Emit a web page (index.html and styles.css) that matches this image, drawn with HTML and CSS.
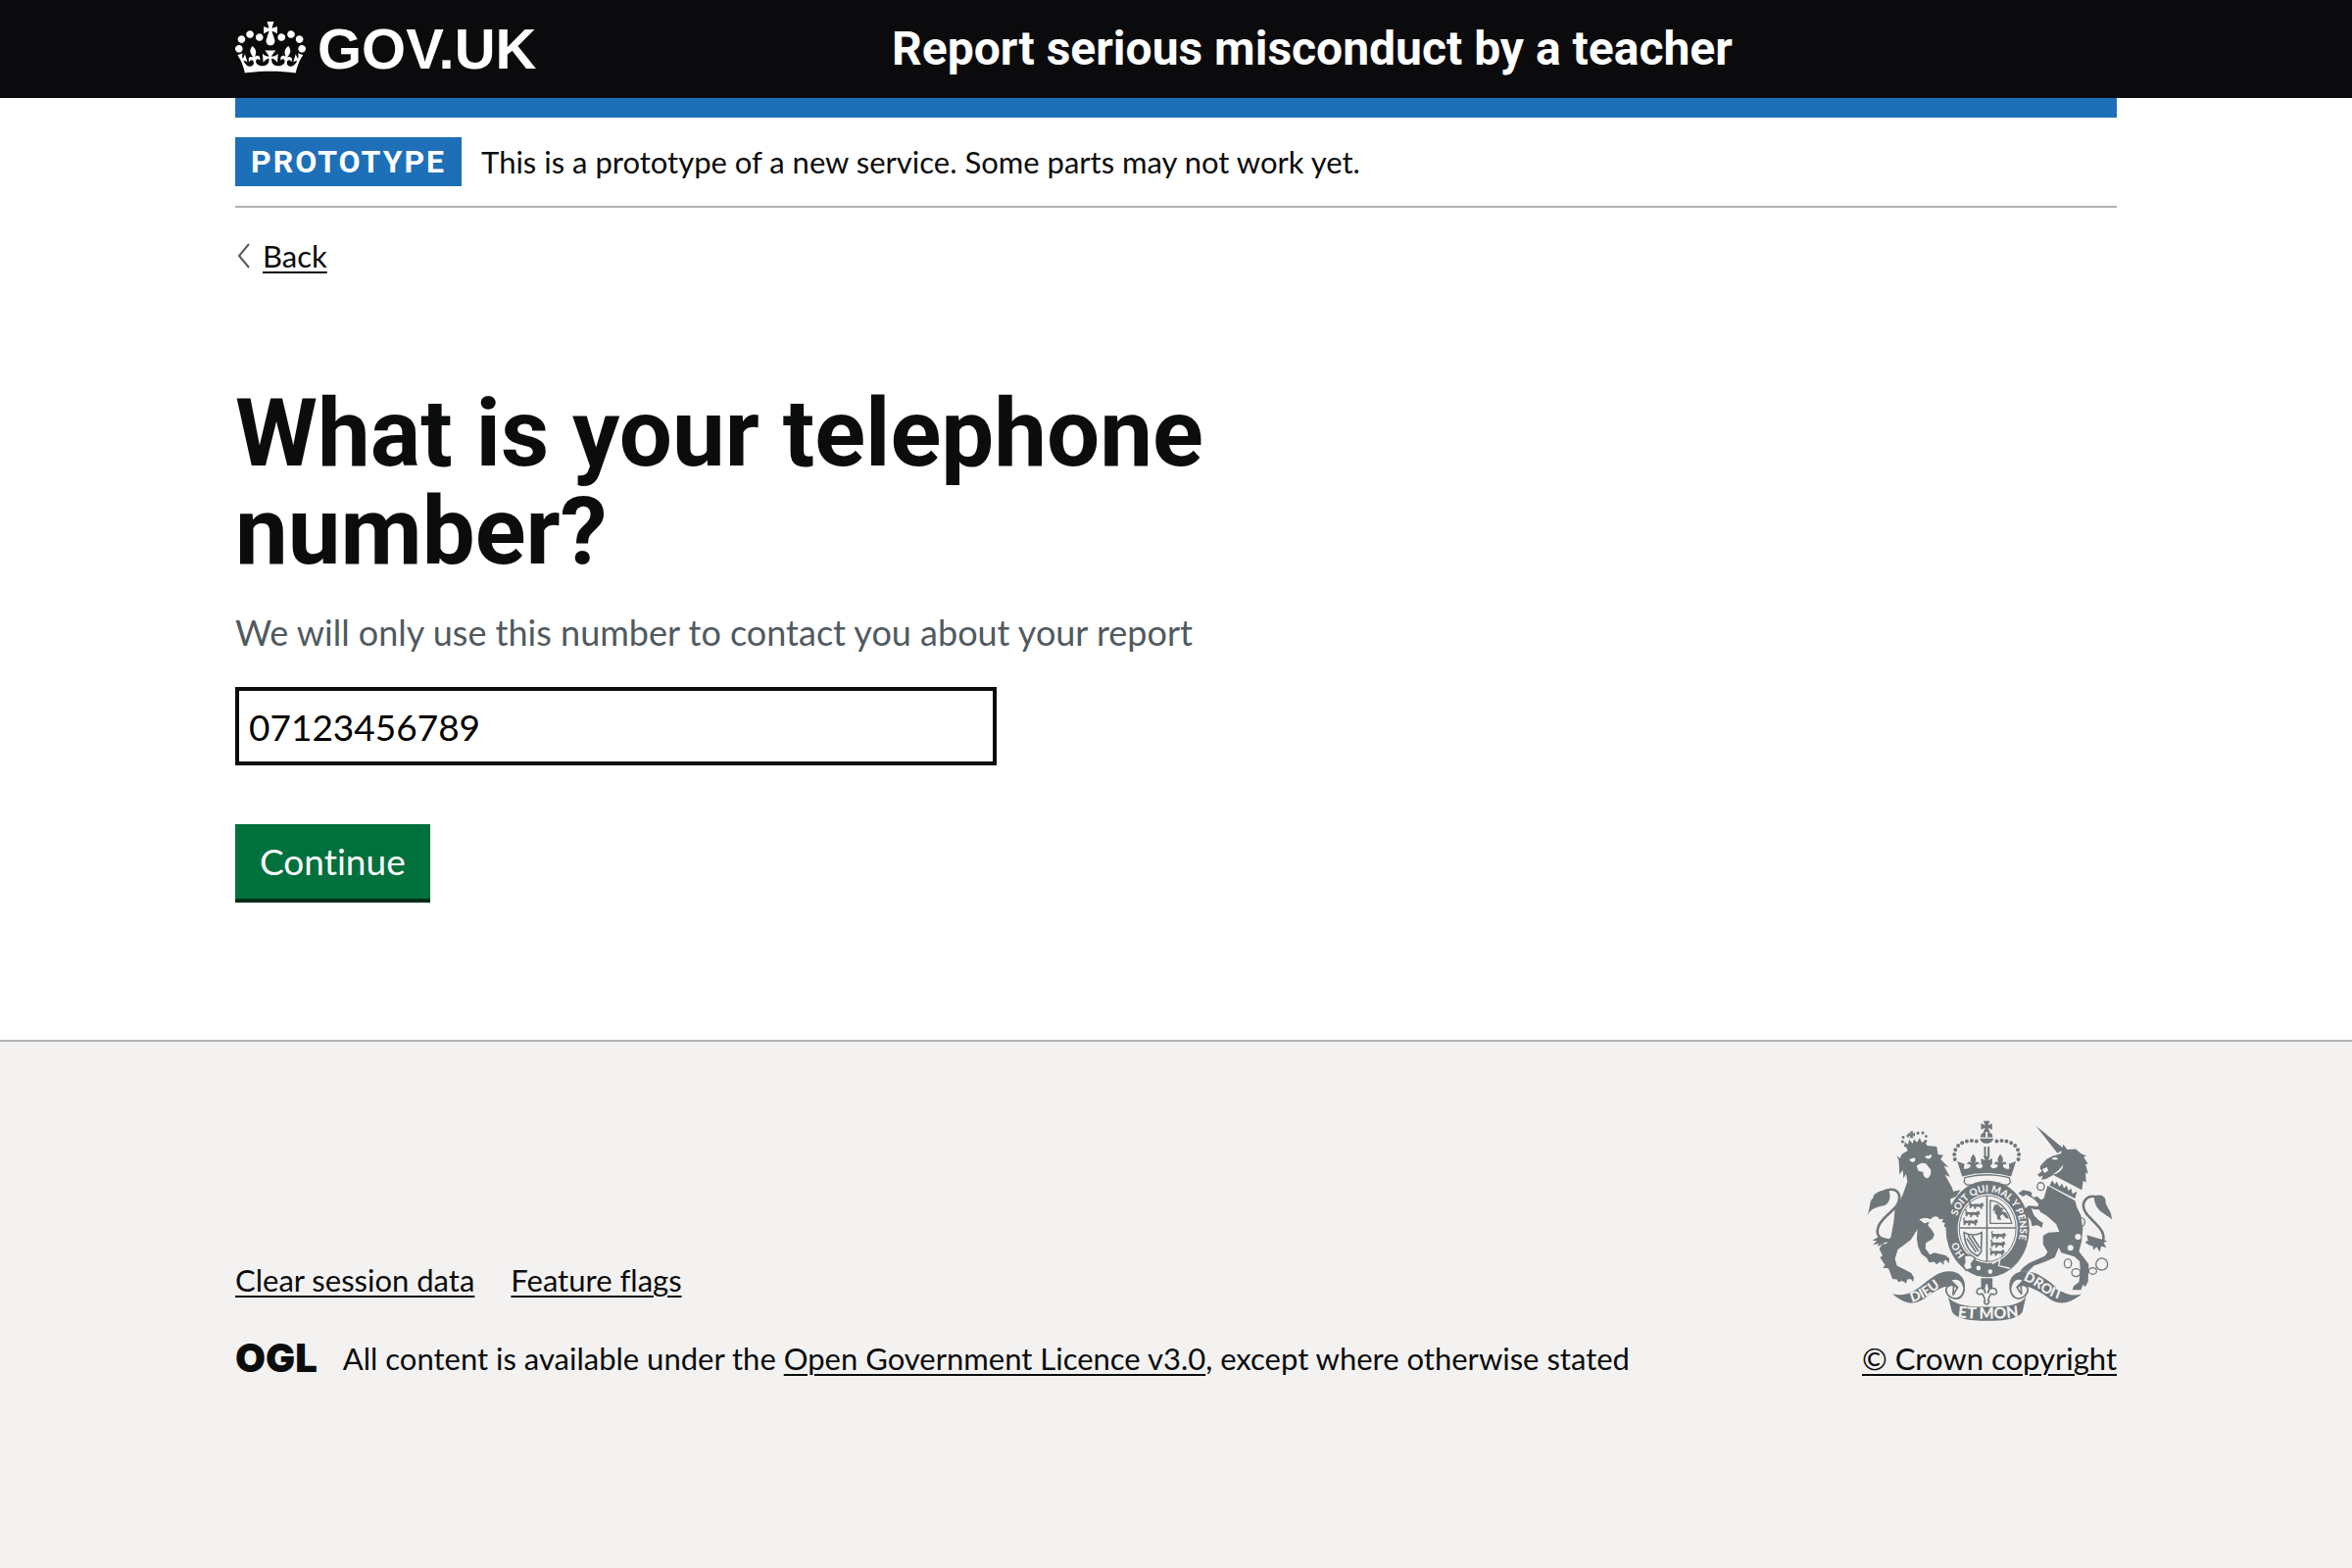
FILE: index.html
```html
<!DOCTYPE html>
<html lang="en">
<head>
  <meta charset="utf-8">
  <meta name="viewport" content="width=device-width, initial-scale=1">
  <title>What is your telephone number? - Report serious misconduct by a teacher - GOV.UK</title>
  <link rel="stylesheet" href="styles.css">
</head>
<body>
  <header class="header">
    <div class="container header-row">
      <a class="header-logo" href="#" aria-label="GOV.UK">
        <svg class="crown" viewBox="0 0 132 97" width="72" height="53" aria-hidden="true">
          <path fill="currentColor" fill-rule="evenodd" d="M25 30.2c3.5 1.5 7.7-.2 9.1-3.7 1.5-3.6-.2-7.8-3.9-9.2-3.6-1.4-7.6.3-9.1 3.9-1.4 3.5.3 7.5 3.9 9zM9 39.5c3.6 1.5 7.8-.2 9.2-3.7 1.5-3.6-.2-7.8-3.9-9.1-3.6-1.5-7.6.2-9.1 3.8-1.4 3.5.3 7.5 3.8 9zM4.4 57.2c3.5 1.5 7.7-.2 9.1-3.8 1.5-3.6-.2-7.7-3.9-9.1-3.5-1.5-7.6.3-9.1 3.8-1.4 3.5.3 7.6 3.9 9.1zm38.3-21.4c3.5 1.5 7.7-.2 9.1-3.8 1.5-3.6-.2-7.7-3.9-9.1-3.6-1.5-7.6.3-9.1 3.8-1.3 3.6.4 7.7 3.9 9.1zm64.4-5.6c-3.6 1.5-7.8-.2-9.1-3.7-1.5-3.6.2-7.8 3.8-9.2 3.6-1.4 7.7.3 9.2 3.9 1.3 3.5-.4 7.5-3.9 9zm15.9 9.3c-3.6 1.5-7.7-.2-9.1-3.7-1.5-3.6.2-7.8 3.7-9.1 3.6-1.5 7.7.2 9.2 3.8 1.5 3.5-.3 7.5-3.8 9zm4.7 17.7c-3.6 1.5-7.8-.2-9.2-3.8-1.5-3.6.2-7.7 3.9-9.1 3.6-1.5 7.7.3 9.2 3.8 1.3 3.5-.4 7.6-3.9 9.1zM89.3 35.8c-3.6 1.5-7.8-.2-9.2-3.8-1.4-3.6.2-7.7 3.9-9.1 3.6-1.5 7.7.3 9.2 3.8 1.4 3.6-.3 7.7-3.9 9.1zM69.7 17.7l8.9 4.7V9.3l-8.9 2.8c-.2-.3-.5-.6-.9-.9L72.4 0H59.6l3.5 11.2c-.3.3-.6.5-.9.9l-8.8-2.8v13.1l8.8-4.7c.3.3.6.7.9.9l-5 15.4v.1c-.2.8-.4 1.6-.4 2.4 0 4.1 3.1 7.5 7 8.1h.2c.3 0 .7.1 1 .1.4 0 .7 0 1-.1h.2c4-.6 7.1-4.1 7.1-8.1 0-.8-.1-1.7-.4-2.4V34l-5.1-15.4c.4-.2.7-.6 1-.9zM66 92.8c16.9 0 32.8 1.1 47.1 3.2 4-16.9 8.9-26.7 14-33.5l-9.6-3.4c1 4.9 1.1 7.2 0 10.2-1.5-1.4-3-4.3-4.2-8.7L108.6 76c2.8-2 5-3.2 7.5-3.3-4.4 9.4-10 11.9-13.6 11.2-4.3-.8-6.3-4.6-5.6-7.9 1-4.7 5.7-5.9 8-.5 4.3-8.7-3-11.4-7.6-8.8 7.1-7.2 7.9-13.5 2.1-21.1-8 6.1-8.1 12.3-4.5 20.8-4.7-5.4-12.1-2.5-9.5 6.2 3.4-5.2 7.9-2 7.2 3.1-.6 4.3-6.4 7.8-13.5 7.2-10.3-.9-10.9-8-11.2-13.8 2.5-.5 7.1 1.8 11 7.3L80.2 60c-4.1 4.4-8 5.3-12.3 5.4 1.4-4.4 8-11.6 8-11.6H55.5s6.4 7.2 7.9 11.6c-4.2-.1-8-1-12.3-5.4l1.4 16.4c3.9-5.5 8.5-7.7 10.9-7.3-.3 5.8-.9 12.8-11.1 13.8-7.2.6-12.9-2.9-13.5-7.2-.7-5 3.8-8.3 7.1-3.1 2.7-8.7-4.6-11.6-9.4-6.2 3.7-8.5 3.6-14.7-4.6-20.8-5.8 7.6-5 13.9 2.2 21.1-4.7-2.6-11.9.1-7.7 8.8 2.3-5.5 7.1-4.2 8.1.5.7 3.3-1.3 7.1-5.7 7.9-3.5.7-9-1.8-13.5-11.2 2.5.1 4.7 1.3 7.5 3.3l-4.7-15.4c-1.2 4.4-2.7 7.2-4.3 8.7-1.1-3-.9-5.3 0-10.2l-9.5 3.4c5 6.9 9.9 16.7 14 33.5 14.8-2.1 30.8-3.2 47.7-3.2z"/>
        </svg>
        <span class="wordmark">GOV.UK</span>
      </a>
      <a class="service-name" href="#">Report serious misconduct by a teacher</a>
    </div>
  </header>

  <div class="container page">
    <div class="phase-banner">
      <strong class="tag">PROTOTYPE</strong>
      <span>This is a prototype of a new service. Some parts may not work yet.</span>
    </div>

    <a class="back-link" href="#">
      <svg width="28" height="26" viewBox="0 0 28 26" aria-hidden="true"><path d="M14 1 4 13l10 12" fill="none" stroke="#505a5f" stroke-width="2"/></svg>
      <span>Back</span>
    </a>

    <main class="main">
      <form class="form">
        <h1 class="heading"><label for="telephone">What is your telephone number?</label></h1>
        <div class="hint" id="telephone-hint">We will only use this number to contact you about your report</div>
        <input class="input" id="telephone" name="telephone" type="tel" value="07123456789" aria-describedby="telephone-hint">
        <button class="button" type="submit">Continue</button>
      </form>
    </main>
  </div>

  <footer class="footer">
    <div class="container footer-row">
      <div class="footer-meta">
        <ul class="footer-links">
          <li><a href="#">Clear session data</a></li>
          <li><a href="#">Feature flags</a></li>
        </ul>
        <div class="licence">
          <span class="ogl">OGL</span>
          <span>All content is available under the <a href="#">Open Government Licence v3.0</a>, except where otherwise stated</span>
        </div>
      </div>
      <a class="copyright" href="#">
        <svg class="crest" viewBox="40 40 754 615" width="251" height="205" aria-hidden="true">
          <defs>
            <path id="garter" d="M410 484A99 112 0 0 1 410 260A99 112 0 0 1 410 484"/>
            <path id="dieu" d="M178 598Q216 588 246 564T310 532"/>
            <path id="droit" d="M518 530Q548 541 574 562T670 600"/>
            <path id="etmon" d="M318 643Q408 655 506 642"/>
            <path id="patee" d="M-10-17H10L4-4 17-10V10L4 4 10 17H-10L-4 4-17 10V-10L-4-4Z"/>
            <path id="fleur" d="M0-20C-10-8-10 0-4 8C-10 0-20 2-18 12C-14 8-10 10-8 16L-10 22H10L8 16C10 10 14 8 18 12C20 2 10 0 4 8C10 0 10-8 0-20Z"/>
            <path id="passant" d="M0 8l5-7 9 2 8-1 12 1 6-4 6 2-2 5 5 1-8 4 1 6-5 1-2-6-11-1-3 7-6-1 2-6-7-1-3 6-6-1 3-6zM4 3C-3-3 2-8 8-6l-4 3 3 4z"/>
          </defs>
          <g class="crest-ink">
            <!-- lion -->
            <path d="M141 157l6-13 20-12 2-8 52-12 4 6 29 3 4 24 16 2-8 13 24 24-14-4 19 34-16-7 20 35 6 16 22-4-14 20-18 8 6 30 14 16-4 22 8 34-14 14-7-4 2-12-12 4-4-6 4-10-12-2 2-12-15 4 4-14-14-2c-12 4-24 8-26 18l12 14 8 14-6 14-20 12-2 16 14 20 14-6 34 8 12 10-2 16-8-12-8 4 2 12-12-10-12 8-6-8-16 2-8-14-16-12-10-22-4-24 2-30-20 32-40 30-9 28 6 22 24 12 20 10 8 14-2 14-8-10-10 2-4 12-12-8-12 4-4-8-14-2-4-12-8-20-18-2 8-8-16-24 8-4-10-22 8-14 14-2 14-22 8-44 4-40 24-44 14-40-4-24-8 14-2-26-10 14-2-40-6-18z"/>
            <path d="M124 403C92 420 62 396 76 364C92 326 146 312 139 270C134 250 112 248 92 258" fill="none" stroke-width="8" class="crest-line"/>
            <path d="M42 330C52 302 46 288 60 278C56 264 84 254 106 252C114 270 112 290 96 300C76 306 56 306 42 330ZM78 396l-22 12 14 2-12 12 18-4-4 10 24-14 30-6z"/>
            <path d="M166 136l-12-30 12 8 4-14 10 12 4-14 10 10 8-14 6 14 14-6-4 26-24 4z"/>
            <g class="crest-line crest-beads" stroke-width="9"><path d="M158 118C142 100 144 90 166 88"/><path d="M220 104C226 84 216 74 194 80"/></g>
            <use href="#patee" transform="translate(177 84) scale(.6)"/>
            <!-- unicorn -->
            <path d="M558 57L645 128 624 141ZM571 181l20-22 18-9 26-8 7-28 12 16 26-2 16 14 18 8-10 2 14 22-8 0 8 30-8-4 2 30-9-4-4 28-88-46-22 12-14 2 4-12-10 4-6-8 14-10-6-8z"/>
            <path d="M594 240l84 46 6 22 12 24 6 40-4 40-8 30 20 26 10 14-2 52-8 16-8-6-6 16H670l4-12 16-12 4-34-2-30-16-14-40-12-8-16-12 30-30 14-34 12-18 18H508l12-14 16-12 50-22 8-12-14-24 0-26 16-10 34-2-10-24-30-26-24-14-22-8 8 20 14 16 14 8-4 16-12-8-18 2-4-18-14-16-6-18 14-10 28 2 2-8-16-16-22-12-10 6-14-10 14-10 22 4 22 16 12 10 8-4z"/>
            <path d="M712 412C746 436 774 416 762 384C748 352 698 330 704 296C710 274 730 268 752 278" fill="none" stroke-width="8" class="crest-line"/>
            <path d="M736 274C760 262 774 276 772 294C780 314 790 320 791 344C774 326 738 322 736 274ZM714 392l6 30 12-4 2 20 10-10 10 16 4-18 16 4-8-14 10-6z"/>
            <!-- crown -->
            <use href="#patee" x="407" y="59"/>
            <path d="M388 92A20 18 0 0 1 404 75V92ZM426 92A20 18 0 0 0 410 75V92ZM386 96h42q-4 15-21 15t-21-15zM399 121h6v30h-6zM410 121h6v30h-6z"/>
            <g class="crest-line crest-beads" stroke-width="12"><path d="M376 104C330 96 296 126 312 166"/><path d="M438 104C484 96 518 126 502 166"/></g>
            <path d="M317 166l22 8-2 14q12 4 18-4h22q8 8 18-2l-2-16 14 4 14-4-2 16q10 10 18 2h22q6 8 18 4l-2-14 22-8-15 46q-75-20-150 0z"/>
            <use href="#patee" x="407" y="167"/>
            <use href="#fleur" x="366" y="164"/><use href="#fleur" x="449" y="164"/>
            <path d="M340 216q67-18 136 0l4 14-8 8h-126l-8-8z" class="crest-line crest-paper" stroke-width="4"/>
            <!-- garter and shield -->
            <ellipse cx="410" cy="373" rx="128" ry="148"/>
            <ellipse cx="410" cy="372" rx="92" ry="106" class="crest-paper"/>
            <ellipse cx="410" cy="372" rx="87" ry="101" fill="none" stroke-width="3" class="crest-line"/>
            <path d="M324 370H497M408 272V474" stroke-width="5" class="crest-line"/>
            <g><use href="#passant" x="352" y="294"/><use href="#passant" x="340" y="319"/><use href="#passant" x="334" y="345"/><use href="#passant" x="420" y="386"/><use href="#passant" x="418" y="412"/><use href="#passant" x="416" y="438"/></g>
            <path d="M418 286Q466 290 484 356H418Z" fill="none" stroke-width="4" class="crest-line"/>
            <path d="M430 300l12-2 8 10 10 2-6 8 14 6 8 18-10-2-10-12-8 6 4 12-12-2-2-14-8-8 6-6-10 2z"/>
            <path d="M338 384Q366 398 392 384L390 444 380 456Q340 440 338 384ZM350 392l32 50M362 394l24 38M346 402l28 42" fill="none" stroke-width="5" class="crest-line"/>
            <circle cx="382" cy="493" r="7" class="crest-paper"/><circle cx="418" cy="504" r="7" class="crest-paper"/>
            <path d="M338 456q22-8 34 8l-12 16 4 14-20 6q-14-14-4-24z" class="crest-line crest-paper" stroke-width="5"/>
            <path d="M424 480l24-14-4 20 34 8" fill="none" class="crest-cut" stroke-width="4"/>
            <!-- scrolls -->
            <path d="M118 572C160 584 190 562 216 540C246 516 270 498 304 504C330 510 344 530 340 560C334 590 316 596 300 580L310 570C318 560 316 548 300 548C270 546 236 572 214 588C184 606 158 606 118 572Z"/>
            <path d="M698 573C656 584 630 562 606 540C576 516 546 498 512 504C486 510 472 530 478 560C486 590 502 592 516 578L504 568C496 558 504 548 518 548C548 550 580 572 604 590C632 606 660 604 698 573Z"/>
            <path d="M284 560C286 604 340 612 408 612C476 612 530 604 532 562L517 626C508 648 460 655 408 655C356 655 308 648 300 624Z"/>
            <path d="M306 546C280 542 276 566 294 580C316 596 336 580 338 556C334 530 318 520 296 530L318 552 304 576ZM512 546C536 542 540 566 522 580C500 596 482 580 480 556C484 530 500 520 520 530L500 552 514 574Z" class="crest-line crest-paper" stroke-width="5"/>
            <!-- fleur-de-lis under the garter -->
            <path d="M390 524h35v42h-35z"/>
            <path d="M407 534C396 550 398 560 403 570C402 552 376 548 377 568C380 578 392 572 394 572L400 584 402 592A7 7 0 1 0 412 592L414 584 420 572C422 572 436 578 438 568C438 548 412 552 411 570C416 560 418 550 407 534Z" class="crest-line crest-paper" stroke-width="5"/>
            <!-- chain -->
            <g fill="none" class="crest-line" stroke-width="4"><ellipse cx="573" cy="243" rx="11" ry="12"/><ellipse cx="695" cy="352" rx="13" ry="14"/><ellipse cx="656" cy="479" rx="11" ry="14"/><ellipse cx="681" cy="507" rx="13" ry="12"/><ellipse cx="732" cy="502" rx="12" ry="10"/><circle cx="760" cy="481" r="18"/></g>
            <g class="crest-paper"><circle cx="687" cy="397" r="9"/><circle cx="664" cy="431" r="9"/><circle cx="553" cy="268" r="8"/><ellipse cx="562" cy="325" rx="10" ry="12"/></g>
            <!-- faces, mane and collar -->
            <g class="crest-paper">
              <path d="M170 160q12-6 18-4 2 12-8 12-8 0-10-8zM217 150q14 0 20-6 4 6-2 12-12 6-18-6zM192 180q16-14 30-6l14 18q2 18-10 26-14-2-14-20l-14-2zM200 344q22-10 34 0l10-8q14-4 18 8l12-2-4 10 10 4-6 8 8 6-8 8-8-14-14-10-14 12-8-14-14 4z"/>
              <path d="M606 158q10-8 20 0-8 6-20 0zM578 190l14-6 4 10-12 8zM642 176q-2 24-34 32 20-12 34-32z"/>
              <path d="M600 216l92 50-10 22-88-50z"/>
            </g>
            <path d="M600 240l8-16 8 12 6-8 8 16 8-10 6 14 8-8 6 16 8-8 4 18 14-8-6 22z"/>
          </g>
          <g class="crest-text">
            <text font-size="30"><textPath href="#garter" startOffset="78">HO</textPath></text>
            <text font-size="30"><textPath href="#garter" startOffset="204">SOIT QUI MAL Y PENSE</textPath></text>
            <text font-size="42"><textPath href="#dieu">DIEU</textPath></text>
            <text font-size="42"><textPath href="#droit">DROIT</textPath></text>
            <text font-size="48"><textPath href="#etmon">ET MON</textPath></text>
          </g>
        </svg>
        <span>© Crown copyright</span>
      </a>
    </div>
  </footer>
</body>
</html>
```
FILE: styles.css
```css
*, *::before, *::after { box-sizing: border-box; }

body {
  margin: 0;
  min-height: 100vh;
  display: flex;
  flex-direction: column;
  background: #fff;
  color: #0b0c0c;
  font: 400 31px/40px Lato, "Liberation Sans", sans-serif;
  font-variant-ligatures: none;
}

a {
  color: inherit;
  text-decoration-thickness: 2px;
  text-underline-offset: 4px;
}

.container {
  width: 80%;
  margin: 0 auto;
}

.header { background: #0b0b0d; color: #fff; }
.header-row {
  display: grid;
  grid-template-columns: calc(100% / 3 + 30px) 1fr;
  align-items: center;
  min-height: 100px;
}
.header a { text-decoration: none; }
.header-logo { display: flex; align-items: center; gap: 12px; }
.crown { margin-bottom: 4px; }
.wordmark { font: 700 58px/60px "Liberation Sans", Arial, sans-serif; }
.service-name { font: 700 48px/60px Roboto, sans-serif; }

.page { border-top: 20px solid #1d70b8; }

.phase-banner {
  display: flex;
  align-items: center;
  gap: 20px;
  padding: 20px 0;
  border-bottom: 2px solid #b1b4b6;
}
.tag {
  padding: 0 16px;
  background: #1d70b8;
  color: #fff;
  font: 700 32px/50px Roboto, sans-serif;
  letter-spacing: 2px;
}

.back-link {
  display: inline-flex;
  align-items: center;
  margin-top: 29px;
  text-decoration: none;
}
.back-link span { text-decoration: underline 2px; text-underline-offset: 4px; }

.main { padding: 110px 0 144px; }
.form {
  display: flex;
  flex-direction: column;
  align-items: flex-start;
  max-width: 1270px;
}
.heading {
  max-width: 1100px;
  margin: 0 0 28px;
  font: 700 96px/100px Roboto, sans-serif;
}
.hint {
  margin-bottom: 31px;
  color: #505a5f;
  font-size: 36px;
  line-height: 50px;
}
.input {
  width: 100%;
  max-width: 777px;
  height: 80px;
  margin: 0 0 60px;
  padding: 0 10px;
  border: 4px solid #0b0b0d;
  border-radius: 0;
  background: #fff;
  color: #000;
  font: 400 37px/50px Lato, sans-serif;
}
.button {
  padding: 13px 25px;
  border: 0;
  background: #00703c;
  box-shadow: 0 4px 0 #002d18;
  color: #fff;
  font: 400 37px/50px Lato, sans-serif;
  font-variant-ligatures: none;
}

.footer {
  flex: 1;
  padding: 80px 0 190px;
  border-top: 2px solid #b1b4b6;
  background: #f3f2f1;
}
.footer-row { display: flex; align-items: flex-end; justify-content: space-between; gap: 40px; }
.footer-links {
  display: flex;
  flex-wrap: wrap;
  gap: 0 37px;
  margin: 0 0 40px;
  padding: 0;
  list-style: none;
}
.licence { display: flex; align-items: center; gap: 26px; }
.ogl { font: 900 40px/40px Inter, sans-serif; }

.copyright { display: flex; flex-direction: column; align-items: center; gap: 18px; white-space: nowrap; text-decoration: none; }
.copyright span { text-decoration: underline 2px; text-underline-offset: 4px; }

.crest-ink { fill: #6f777b; }
.crest-line { stroke: #6f777b; }
.crest-beads { fill: none; stroke-linecap: round; stroke-dasharray: 0 15; }
.crest-paper { fill: #f3f2f1; }
.crest-cut { stroke: #f3f2f1; }
.crest-text { fill: #f3f2f1; font-family: Lato, sans-serif; font-weight: 900; }
```
